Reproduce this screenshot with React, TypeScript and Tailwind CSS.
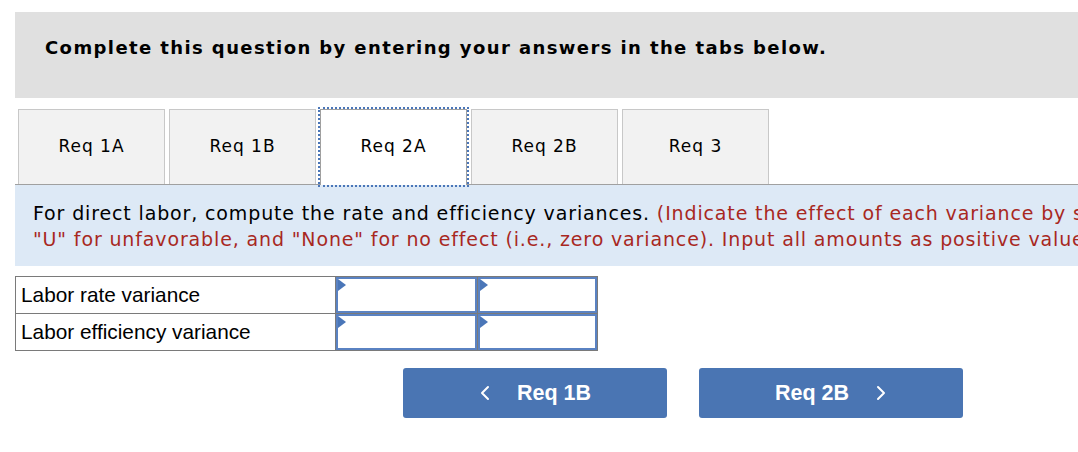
import React from 'react';
import { ChevronLeft, ChevronRight } from 'lucide-react';

const tabs = ['Req 1A', 'Req 1B', 'Req 2A', 'Req 2B', 'Req 3'];
const rows = ['Labor rate variance', 'Labor efficiency variance'];

const InputBox: React.FC = () => (
  <div className="relative h-full w-full border-2 border-[#5a82c2]">
    <svg className="absolute left-0 top-0" width="9" height="14" viewBox="0 0 9 14">
      <path d="M0 0 L8 6 L0 12 Z" fill="#4a76b8" />
    </svg>
  </div>
);

export default function App() {
  return (
    <div className="w-[1078px] h-[452px] overflow-hidden bg-white">
      <div className="w-[1400px] pt-3 pl-[15px]">
        {/* header */}
        <div className="h-[86px] bg-[#e0e0e0] pt-[24px] pl-[30px]">
          <p className="font-['DejaVu_Sans',sans-serif] font-bold text-[18px] tracking-[1.4px] leading-[24px] text-black">
            Complete this question by entering your answers in the tabs below.
          </p>
        </div>

        {/* tabs */}
        <div className="mt-[11px] flex gap-1 pl-[3px] border-b border-[#a0a0a0]">
          {tabs.map((t) =>
            t === 'Req 2A' ? (
              <div
                key={t}
                className="relative z-10 -mb-px flex h-[76px] w-[147px] items-center justify-center border border-b-0 border-[#a0a0a0] bg-white pb-px outline-2 outline-dotted outline-[#4a76b8] font-['DejaVu_Sans',sans-serif] text-[17px] tracking-[1px] text-black"
              >
                {t}
              </div>
            ) : (
              <div
                key={t}
                className="flex h-[75px] w-[147px] items-center justify-center border border-b-0 border-[#c8c8c8] bg-[#f2f2f2] font-['DejaVu_Sans',sans-serif] text-[17px] tracking-[1px] text-black"
              >
                {t}
              </div>
            )
          )}
        </div>

        {/* instructions */}
        <div className="h-[81px] bg-[#dde9f6] pt-[15px] pl-[18px] font-['DejaVu_Sans',sans-serif] text-[19px] tracking-[0.86px] leading-[26px] whitespace-nowrap">
          <p className="text-black">
            For direct labor, compute the rate and efficiency variances.{' '}
            <span className="text-[#a8281f]">(Indicate the effect of each variance by selecting "F" for favorable,</span>
          </p>
          <p className="text-[#a8281f]">
            "U" for unfavorable, and "None" for no effect (i.e., zero variance). Input all amounts as positive values.)
          </p>
        </div>

        {/* answer table */}
        <table className="mt-[10px] w-[583px] border-collapse font-['Liberation_Sans',sans-serif] text-[20.8px] text-black">
          <tbody>
            {rows.map((r) => (
              <tr key={r} className="h-[37px]">
                <td className="w-[320px] border border-[#7a7a7a] pl-[5px] leading-[22px]">{r}</td>
                <td className="w-[143px] border border-[#7a7a7a] p-0 h-[37px]">
                  <InputBox />
                </td>
                <td className="w-[120px] border border-[#7a7a7a] p-0 h-[37px]">
                  <InputBox />
                </td>
              </tr>
            ))}
          </tbody>
        </table>

        {/* nav buttons */}
        <div className="mt-[17px] flex gap-8 pl-[388px] font-['Liberation_Sans',sans-serif]">
          <button className="flex h-[50px] w-[264px] items-center justify-center gap-[20px] rounded-[3px] bg-[#4a75b3] pr-[6px] text-[21.5px] font-bold text-white">
            <ChevronLeft size={24} strokeWidth={2} />
            <span>Req 1B</span>
          </button>
          <button className="flex h-[50px] w-[264px] items-center justify-center gap-[20px] rounded-[3px] bg-[#4a75b3] pl-[6px] text-[21.5px] font-bold text-white">
            <span>Req 2B</span>
            <ChevronRight size={24} strokeWidth={2} />
          </button>
        </div>
      </div>
    </div>
  );
}
